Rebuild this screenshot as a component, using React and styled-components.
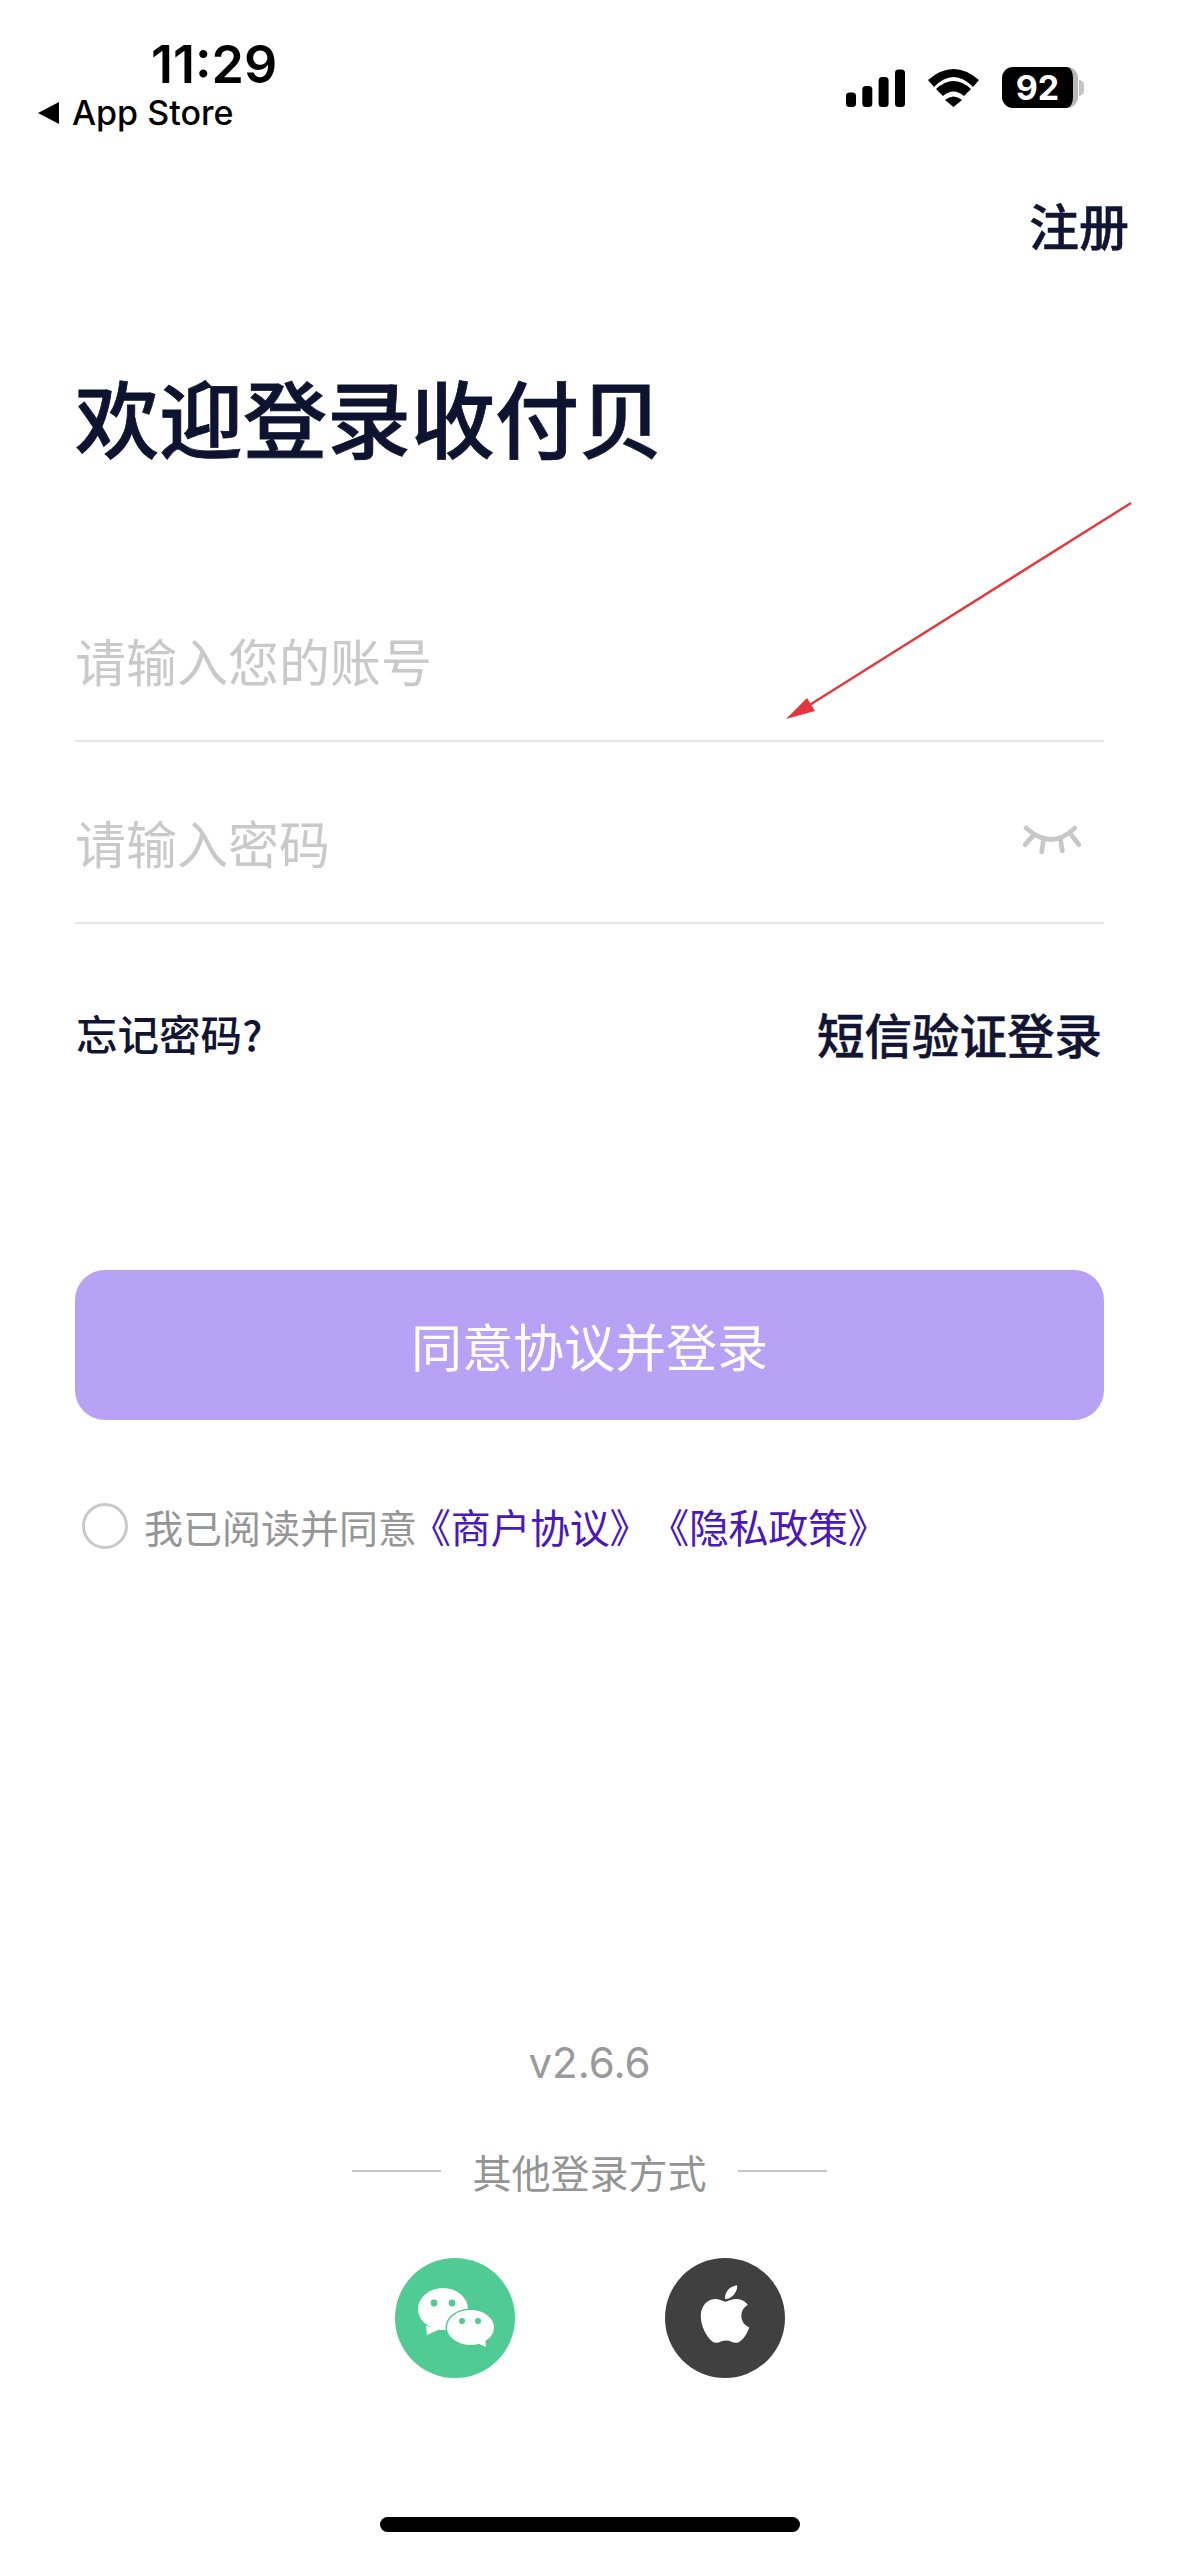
import styled, { createGlobalStyle } from 'styled-components'
import { FaApple } from 'react-icons/fa'

const GlobalStyle = createGlobalStyle`
  html, body {
    margin: 0;
    padding: 0;
    background: #ffffff;
  }
`

const cjk = `"Noto Sans CJK SC", "Noto Sans", sans-serif`

const Page = styled.div`
  box-sizing: border-box;
  position: relative;
  display: flex;
  flex-direction: column;
  width: 1179px;
  height: 2556px;
  overflow: hidden;
  background: #ffffff;
  font-family: ${cjk};
`

const StatusBar = styled.div`
  display: flex;
  justify-content: space-between;
  height: 132px;
  padding: 36px 95px 0 38px;
  box-sizing: border-box;
  color: #000000;
  font-family: "Inter", "Liberation Sans", sans-serif;
`

const StatusLeft = styled.div`
  display: flex;
  flex-direction: column;
`

const Time = styled.div`
  margin-left: 113px;
  font-size: 52px;
  line-height: 57px;
  font-weight: 600;
`

const BackLink = styled.div`
  display: flex;
  align-items: center;
  gap: 13px;
  font-size: 34px;
  line-height: 40px;
  font-weight: 500;
`

const BackArrow = styled.span`
  width: 0;
  height: 0;
  border-style: solid;
  border-width: 11px 21px 11px 0;
  border-color: transparent #000000 transparent transparent;
`

const StatusRight = styled.div`
  display: flex;
  align-items: center;
  gap: 23px;
  height: 41px;
  margin-top: 31px;
`

const Battery = styled.div`
  display: flex;
  align-items: center;
  gap: 1px;
`

const BatteryBody = styled.div`
  box-sizing: border-box;
  width: 76px;
  height: 41px;
  border-right: 5px solid #b9b9b9;
  border-radius: 11px;
  background: #000000;
  color: #ffffff;
  font-size: 34px;
  font-weight: 700;
  line-height: 41px;
  text-align: center;
`

const BatteryCap = styled.span`
  width: 5px;
  height: 16px;
  border-radius: 0 8px 8px 0;
  background: #c4c4c4;
`

const Content = styled.div`
  flex: 1;
  display: flex;
  flex-direction: column;
  padding: 0 75px 0 75px;
`

const RegisterRow = styled.div`
  display: flex;
  justify-content: flex-end;
  margin-right: -25px;
  margin-top: 62px;
`

const Register = styled.div`
  font-size: 50px;
  line-height: 60px;
  font-weight: 500;
  color: #111533;
  -webkit-text-stroke: 0.5px #111533;
`

const Title = styled.h1`
  margin: 107px 0 0;
  font-size: 84px;
  line-height: 110px;
  font-weight: 500;
  color: #0e1330;
  -webkit-text-stroke: 0.8px #0e1330;
`

const Field = styled.div`
  display: flex;
  align-items: center;
  justify-content: space-between;
  height: 182px;
  box-sizing: border-box;
  padding: 20px 23px 0 0;
  border-bottom: 2px solid #e6e6e6;
`

const FirstField = styled(Field)`
  height: 271px;
  padding-top: 108px;
`

const Placeholder = styled.span`
  font-size: 51px;
  line-height: 60px;
  color: #c9c9c9;
`

const EyeWrap = styled.span`
  display: flex;
  margin-bottom: 4px;
`

const LinkRow = styled.div`
  display: flex;
  align-items: center;
  justify-content: space-between;
  height: 60px;
  margin-top: 79px;
  padding: 0 2px 0 1px;
`

const Forgot = styled.span`
  font-size: 41.5px;
  font-weight: 500;
  color: #111533;
`

const SmsLogin = styled.span`
  font-size: 47.5px;
  font-weight: 500;
  color: #111533;
  -webkit-text-stroke: 0.5px #111533;
`

const SubmitButton = styled.button`
  height: 150px;
  margin-top: 207px;
  border: 0;
  border-radius: 30px;
  background: #b8a2f5;
  color: #ffffff;
  font-family: ${cjk};
  font-size: 51px;
`

const AgreeRow = styled.div`
  display: flex;
  align-items: center;
  margin-top: 82px;
  padding-left: 7px;
  font-size: 39px;
  line-height: 48px;
  color: #969696;
`

const Radio = styled.span`
  box-sizing: border-box;
  width: 46px;
  height: 46px;
  margin-right: 16px;
  border: 3px solid #c9c9c9;
  border-radius: 50%;
`

const AgreeLink = styled.span`
  color: #4a17bd;
  font-size: 40px;
  letter-spacing: -0.3px;
  margin-left: ${props => props.$gap || 0}px;
`

const Footer = styled.div`
  display: flex;
  flex-direction: column;
  align-items: center;
  margin-top: auto;
  padding-bottom: 178px;
`

const Version = styled.div`
  font-family: "Inter", "Liberation Sans", sans-serif;
  font-size: 42px;
  line-height: 50px;
  color: #9a9a9a;
`

const OtherRow = styled.div`
  display: flex;
  align-items: center;
  gap: 31px;
  margin-top: 58px;
  font-size: 39px;
  line-height: 50px;
  color: #949494;
`

const OtherLine = styled.span`
  width: 89px;
  height: 2px;
  background: #c4c4c4;
`

const SocialRow = styled.div`
  display: flex;
  gap: 150px;
  margin-top: 62px;
`

const SocialButton = styled.div`
  display: flex;
  align-items: center;
  justify-content: center;
  width: 120px;
  height: 120px;
  border-radius: 50%;
  background: ${props => props.$color};
  color: #ffffff;
`

const AppleGlyph = styled(FaApple)`
  margin-bottom: 8px;
`

const HomeBar = styled.div`
  position: absolute;
  left: 380px;
  bottom: 24px;
  width: 420px;
  height: 15px;
  border-radius: 8px;
  background: #000000;
`

const Annotation = styled.svg`
  position: absolute;
  left: 770px;
  top: 490px;
`

function SignalIcon() {
  return (
    <svg width="59" height="38" viewBox="0 0 59 38">
      <rect x="0" y="23.5" width="10" height="14.5" rx="3.5" fill="#000" />
      <rect x="16.3" y="17" width="10" height="21" rx="3.5" fill="#000" />
      <rect x="32.6" y="8" width="10" height="30" rx="3.5" fill="#000" />
      <rect x="49" y="0.5" width="10" height="37.5" rx="3.5" fill="#000" />
    </svg>
  )
}

function WifiIcon() {
  return (
    <svg width="51" height="38" viewBox="0 0 51 38" fill="#000">
      <path d="M0 11Q25.5 -11 51 11L45 18Q25.5 -2 6 18Z" />
      <path d="M8 20Q25.5 4 43 20L36 27Q25.5 18 15 27Z" />
      <path d="M17 31Q25.5 24 34 31L25.5 38Z" />
    </svg>
  )
}

function EyeClosedIcon() {
  return (
    <svg width="58" height="30" viewBox="0 0 56 29" fill="none" stroke="#c8c8c8" strokeWidth="4.6" strokeLinecap="round">
      <path d="M3 3Q27 25 50 3" />
      <path d="M10 10L2 19" />
      <path d="M20 13L18 26" />
      <path d="M36 13L38 25" />
      <path d="M47 10L54 19" />
    </svg>
  )
}

function WechatIcon() {
  return (
    <svg width="120" height="120" viewBox="0 0 120 120">
      <ellipse cx="48" cy="51" rx="25" ry="21" fill="#fff" />
      <path d="M31 68L32 77L45 71Z" fill="#fff" />
      <circle cx="39" cy="45" r="3.4" fill="#4fcb93" />
      <circle cx="57" cy="45" r="3.4" fill="#4fcb93" />
      <ellipse cx="75.5" cy="69.5" rx="25" ry="19" fill="#4fcb93" />
      <ellipse cx="75.5" cy="69.5" rx="23.5" ry="17.5" fill="#fff" />
      <path d="M82 85L91 89L90 80Z" fill="#fff" />
      <circle cx="67" cy="63" r="3" fill="#4fcb93" />
      <circle cx="83" cy="63" r="3" fill="#4fcb93" />
    </svg>
  )
}

function App() {
  return (
    <Page>
      <GlobalStyle />
      <StatusBar>
        <StatusLeft>
          <Time>11:29</Time>
          <BackLink>
            <BackArrow />
            App Store
          </BackLink>
        </StatusLeft>
        <StatusRight>
          <SignalIcon />
          <WifiIcon />
          <Battery>
            <BatteryBody>92</BatteryBody>
            <BatteryCap />
          </Battery>
        </StatusRight>
      </StatusBar>
      <Content>
        <RegisterRow>
          <Register>注册</Register>
        </RegisterRow>
        <Title>欢迎登录收付贝</Title>
        <FirstField>
          <Placeholder>请输入您的账号</Placeholder>
        </FirstField>
        <Field>
          <Placeholder>请输入密码</Placeholder>
          <EyeWrap>
            <EyeClosedIcon />
          </EyeWrap>
        </Field>
        <LinkRow>
          <Forgot>忘记密码?</Forgot>
          <SmsLogin>短信验证登录</SmsLogin>
        </LinkRow>
        <SubmitButton>同意协议并登录</SubmitButton>
        <AgreeRow>
          <Radio />
          我已阅读并同意
          <AgreeLink $gap={-6}>《商户协议》</AgreeLink>
          <AgreeLink>《隐私政策》</AgreeLink>
        </AgreeRow>
        <Footer>
          <Version>v2.6.6</Version>
          <OtherRow>
            <OtherLine />
            其他登录方式
            <OtherLine />
          </OtherRow>
          <SocialRow>
            <SocialButton $color="#4fcb93">
              <WechatIcon />
            </SocialButton>
            <SocialButton $color="#404040">
              <AppleGlyph size={66} />
            </SocialButton>
          </SocialRow>
        </Footer>
      </Content>
      <Annotation width="370" height="240" viewBox="0 0 370 240">
        <path d="M361 13L30 221" stroke="#e5383b" strokeWidth="2.4" fill="none" />
        <path d="M16 229L37 208L45 221Z" fill="#e5383b" />
      </Annotation>
      <HomeBar />
    </Page>
  )
}

export default App
